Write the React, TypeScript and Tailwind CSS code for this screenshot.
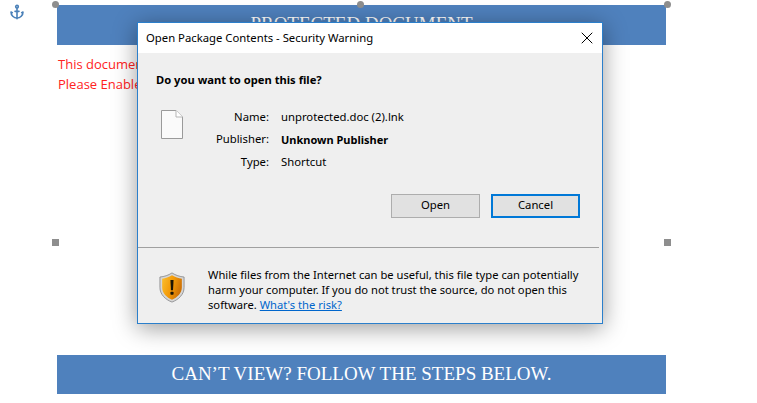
import { Anchor, X } from 'lucide-react'

const SEGOE = "font-['Noto_Sans','Open_Sans',sans-serif]"

const Handle = ({ className }: { className: string }) => (
  <span className={`absolute bg-[#8e8e8e] ${className}`} />
)

const ShieldIcon = () => (
  <svg width="26" height="31" viewBox="0 0 28 33">
    <defs>
      <linearGradient id="shield" x1="0" y1="0" x2="1" y2="0.4">
        <stop offset="0" stopColor="#fbc02f" />
        <stop offset="0.55" stopColor="#f39a08" />
        <stop offset="1" stopColor="#cf7204" />
      </linearGradient>
    </defs>
    <path d="M14 .8C10 3.4 5.6 4.800 1 5.200v11.300C1 24 7 29.600 14 32.200c7-2.600 13-8.200 13-15.700V5.200C22.400 4.800 18 3.400 14 .8z" fill="#d6d6d6" stroke="#7c7e80" strokeWidth=".8" />
    <path d="M14 3.200C10.600 5.300 7 6.500 3.400 7v9.500c0 6.100 4.900 10.800 10.600 13.100 5.700-2.300 10.600-7 10.600-13.100V7C21 6.500 17.400 5.300 14 3.200z" fill="url(#shield)" />
    <path d="M12.300 8.500h3.400l-.6 11h-2.200z" fill="#1c1404" />
    <rect x="12.300" y="21" width="3.400" height="3.400" rx=".8" fill="#1c1404" />
  </svg>
)

const FileIcon = () => (
  <svg width="22" height="29" viewBox="0 0 22 29" fill="none">
    <path d="M.5.500h14.500l6.500 6.500v21.500H.5z" fill="#fafafa" stroke="#9a9a9a" />
    <path d="M15 .5v6.500h6.500" fill="#fff" stroke="#b5b5b5" />
  </svg>
)

const Detail = ({ label, value, bold }: { label: string; value: string; bold?: boolean }) => (
  <div className="flex h-[22.500px] items-center">
    <span className="w-[82px] text-right">{label}</span>
    <span className={`ml-[12px] ${bold ? 'text-[11px] font-bold' : ''}`}>{value}</span>
  </div>
)

const Dialog = () => (
  <div className={`absolute left-[137px] top-[22px] flex h-[302px] w-[466px] flex-col border border-[#2b7fcb] bg-[#efefef] text-[11.300px] text-black shadow-[0_4px_22px_rgba(0,0,0,0.4)] ${SEGOE}`}>
    <div className="flex h-[30px] items-center justify-between bg-white pl-[8px] pr-[5px]">
      <span>Open Package Contents - Security Warning</span>
      <X size={20} strokeWidth={1.2} />
    </div>
    <div className="flex-1 pl-[18px] pt-[19px]">
      <div className="text-[11.200px] font-bold leading-[16px]">Do you want to open this file?</div>
      <div className="mt-[18px] flex">
        <div className="pl-[5px] pt-[4px]">
          <FileIcon />
        </div>
        <div className="ml-[4px]">
          <Detail label="Name:" value="unprotected.doc (2).lnk" />
          <Detail label="Publisher:" value="Unknown Publisher" bold />
          <Detail label="Type:" value="Shortcut" />
        </div>
      </div>
      <div className="mt-[20px] flex justify-end gap-[11px] pr-[22px]">
        <button className="h-[24px] w-[89px] border border-[#adadad] bg-[#e1e1e1]">Open</button>
        <button className="h-[24px] w-[89px] border-2 border-[#0078d7] bg-[#e1e1e1]">Cancel</button>
      </div>
    </div>
    <div className="mr-[3px] h-px bg-[#a0a0a0]" />
    <div className="flex h-[75px] items-start pl-[21px]">
      <div className="pt-[24px]">
        <ShieldIcon />
      </div>
      <p className="ml-[23px] mt-[19px] w-[385px] text-[11.200px] leading-[15px]">
        While files from the Internet can be useful, this file type can potentially harm your computer. If you do not trust the source, do not open this software.{' '}
        <span className="text-[#0066cc] underline">What's the risk?</span>
      </p>
    </div>
  </div>
)

export default function App() {
  return (
    <div className="relative h-[403px] w-[757px] overflow-hidden bg-white">
      <div className="ml-[57px] flex h-full w-[609px] flex-col pt-[5px]">
        <div className="flex h-[40px] items-center justify-center bg-[#4f81bd] pb-[2px] font-['Liberation_Serif',serif] text-[19px] text-white">
          PROTECTED DOCUMENT
        </div>
        <div className="mt-[9px] pl-px font-['Open_Sans',sans-serif] text-[13px] leading-[20px] text-[#ff2222]">
          <p>This document is protected</p>
          <p>Please Enable Content</p>
        </div>
        <div className="mt-[261px] flex h-[39px] items-center justify-center bg-[#4f81bd] font-['Liberation_Serif',serif] text-[19px] text-white">
          CAN’T VIEW? FOLLOW THE STEPS BELOW.
        </div>
      </div>

      <Anchor size={16} strokeWidth={2.4} className="absolute left-[9px] top-[4px] text-[#4a80b8]" />
      <Handle className="left-[52px] top-[1px] h-[7px] w-[7px] rounded-full" />
      <Handle className="left-[357px] top-[1px] h-[7px] w-[7px] rounded-full" />
      <Handle className="left-[664px] top-[1px] h-[7px] w-[7px] rounded-full" />
      <Handle className="left-[52px] top-[239px] h-[7px] w-[7px]" />
      <Handle className="left-[664px] top-[239px] h-[7px] w-[7px]" />

      <Dialog />
    </div>
  )
}
